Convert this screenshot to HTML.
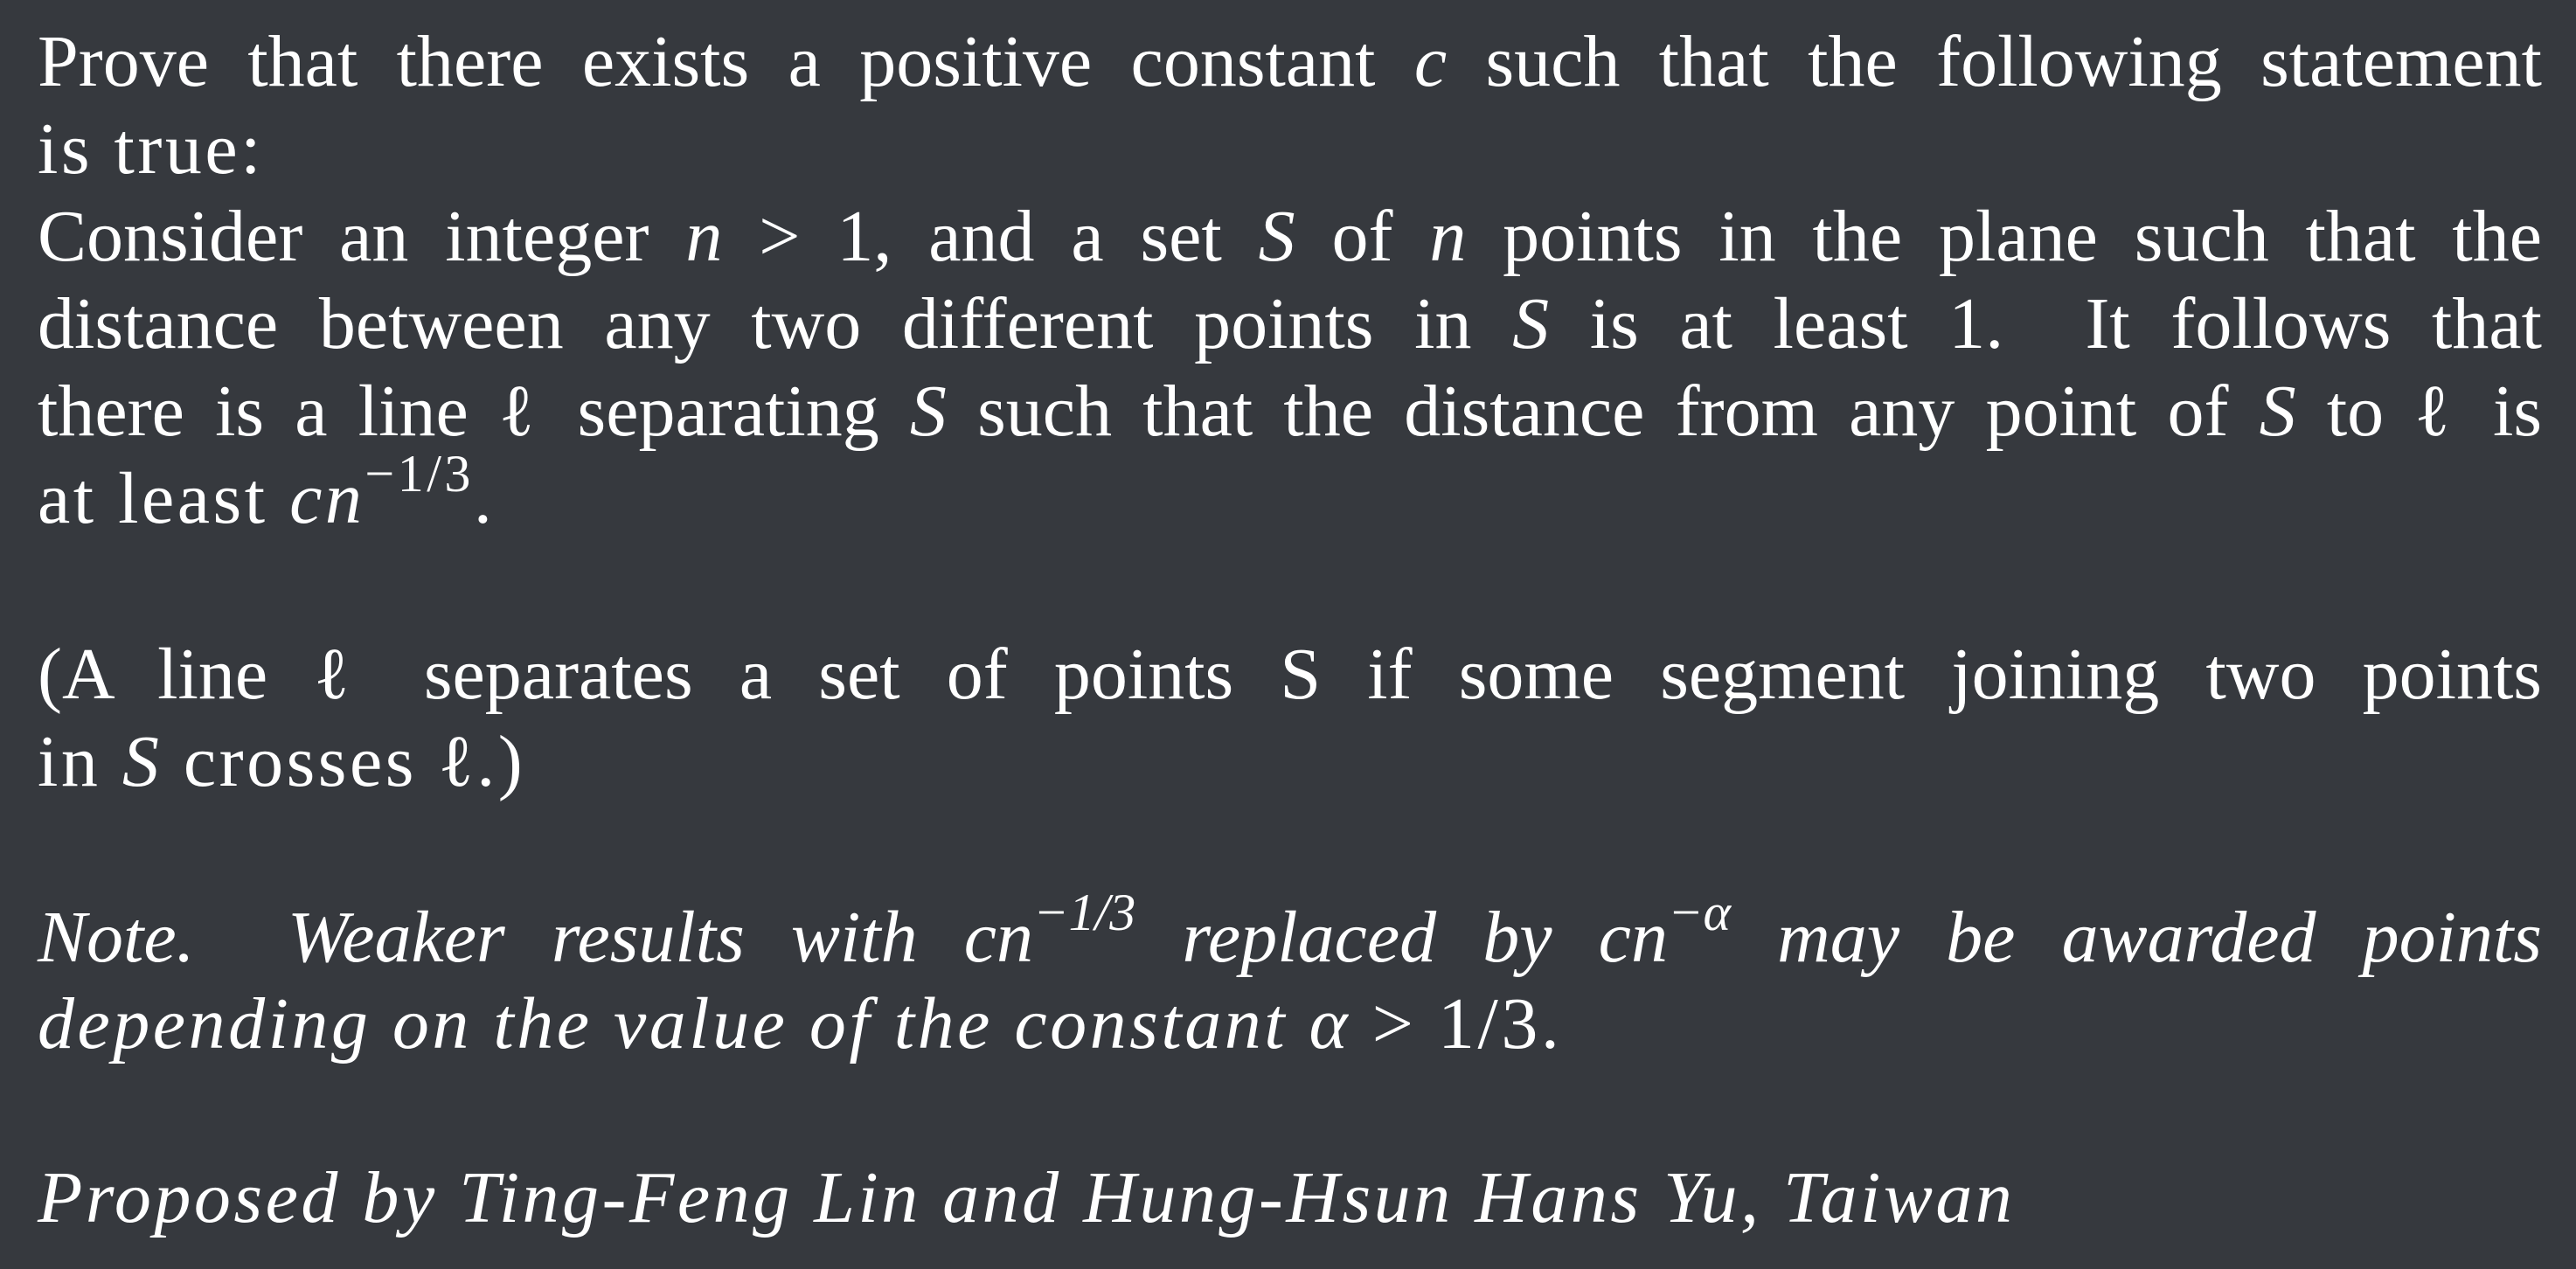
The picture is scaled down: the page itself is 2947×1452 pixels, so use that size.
<!DOCTYPE html>
<html><head><meta charset="utf-8"><style>
html,body{margin:0;padding:0}
body{width:2947px;height:1452px;background:#36393e;color:#fff;font-family:"Liberation Serif","DejaVu Serif",serif;font-size:84px;position:relative;overflow:hidden}
.l{position:absolute;left:43px;width:2865px;height:100px;line-height:100px;white-space:nowrap;letter-spacing:3.5px}
.j{text-align:justify;text-align-last:justify;white-space:normal;letter-spacing:0}
i{font-style:italic}
sup{font-size:60px;line-height:0;vertical-align:0;position:relative;top:-36px}
</style></head><body>
<div class="l j" style="top:21px">Prove that there exists a positive constant <i>c</i> such that the following statement</div>
<div class="l" style="top:121px">is true:</div>
<div class="l j" style="top:221px">Consider an integer <i>n</i> &gt; 1, and a set <i>S</i> of <i>n</i> points in the plane such that the</div>
<div class="l j" style="top:321px">distance between any two different points in <i>S</i> is at least 1. &nbsp;It follows that</div>
<div class="l j" style="top:421px">there is a line ℓ separating <i>S</i> such that the distance from any point of <i>S</i> to ℓ is</div>
<div class="l" style="top:521px">at least <i>cn</i><sup>−1/3</sup>.</div>
<div class="l j" style="top:722px">(A line ℓ separates a set of points S if some segment joining two points</div>
<div class="l" style="top:822px">in <i>S</i> crosses ℓ.)</div>
<div class="l j" style="top:1023px"><i>Note. &nbsp;Weaker results with cn<sup>−1/3</sup> replaced by cn<sup>−α</sup> may be awarded points</i></div>
<div class="l" style="top:1122px"><i>depending on the value of the constant α</i> &gt; 1/3.</div>
<div class="l" style="top:1321px"><i>Proposed by Ting-Feng Lin and Hung-Hsun Hans Yu, Taiwan</i></div>
</body></html>
